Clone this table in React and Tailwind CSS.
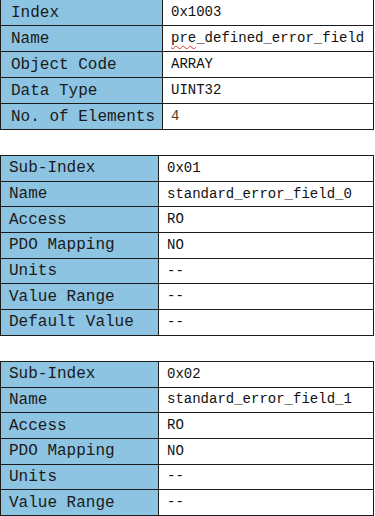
import React from 'react';

const mono = { fontFamily: '"Liberation Mono", "DejaVu Sans Mono", monospace' };

const objectRows = [
  ['Index', '0x1003'],
  ['Name', 'pre_defined_error_field'],
  ['Object Code', 'ARRAY'],
  ['Data Type', 'UINT32'],
  ['No. of Elements', '4'],
];

const sub01 = [
  ['Sub-Index', '0x01'],
  ['Name', 'standard_error_field_0'],
  ['Access', 'RO'],
  ['PDO Mapping', 'NO'],
  ['Units', '--'],
  ['Value Range', '--'],
  ['Default Value', '--'],
];

const sub02 = [
  ['Sub-Index', '0x02'],
  ['Name', 'standard_error_field_1'],
  ['Access', 'RO'],
  ['PDO Mapping', 'NO'],
  ['Units', '--'],
  ['Value Range', '--'],
];

function Value({ text }) {
  if (text === 'pre_defined_error_field') {
    return (
      <span>
        <span className="underline decoration-wavy decoration-[#e0302a] decoration-1 underline-offset-[3px]">pre</span>
        _defined_error_field
      </span>
    );
  }
  if (text === '4') return <span className="text-[#5a3a18]">4</span>;
  return <span>{text}</span>;
}

function PropTable({ rows, labelW, rowH, labelPad }) {
  return (
    <div className="w-[374px] border-x border-b border-[#1c1c1c]" style={mono}>
      {rows.map(([label, value]) => (
        <div key={label} className={`flex border-t border-[#1c1c1c] ${rowH}`}>
          <div className={`${labelW} ${labelPad} shrink-0 flex items-center bg-[#8dc4e2] border-r border-[#1c1c1c] text-[16px] text-[#1a1a1a] whitespace-pre`}>
            {label}
          </div>
          <div className="flex-1 flex items-center pl-[8px] text-[14px] text-[#111] whitespace-pre bg-white">
            <Value text={value} />
          </div>
        </div>
      ))}
    </div>
  );
}

export default function App() {
  return (
    <div className="w-[375px] h-[516px] overflow-hidden bg-white">
      <div className="-mt-px">
        <PropTable rows={objectRows} labelW="w-[162px]" rowH="h-[26px]" labelPad="pl-[10px]" />
      </div>
      <div className="mt-[25px]">
        <PropTable rows={sub01} labelW="w-[158px]" rowH="h-[25.7px]" labelPad="pl-[8px]" />
      </div>
      <div className="mt-[25px]">
        <PropTable rows={sub02} labelW="w-[158px]" rowH="h-[25.7px]" labelPad="pl-[8px]" />
      </div>
    </div>
  );
}
